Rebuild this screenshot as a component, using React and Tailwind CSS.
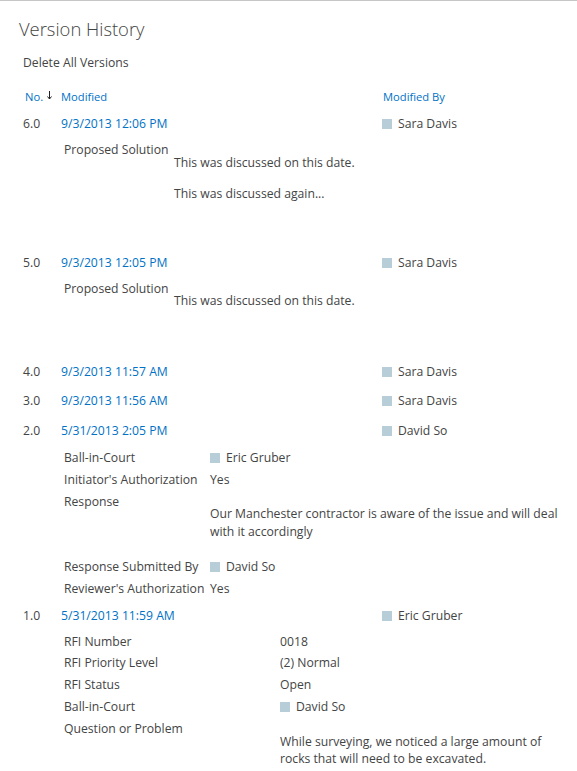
import React from 'react';

const font = "font-['Open_Sans','Noto_Sans',sans-serif]";

const Person = ({ name }) => (
  <span className="flex items-center gap-[6px] whitespace-nowrap">
    <span className="w-[10px] h-[10px] bg-[#b7cdd7]" />
    <span>{name}</span>
  </span>
);

const VersionRow = ({ no, date, by, className = '' }) => (
  <div className={`grid grid-cols-[38px_321px_1fr] h-[22px] items-center pl-[23px] ${className}`}>
    <span>{no}</span>
    <span className="text-[#0072c6] whitespace-nowrap">{date}</span>
    <Person name={by} />
  </div>
);

const Field = ({ label, width, h = 'h-[22px]', children, className = '' }) => (
  <div className={`flex pl-[64px] ${className}`}>
    <div className={`${width} ${h} flex items-center shrink-0 whitespace-nowrap`}>{label}</div>
    <div className={`${h} flex items-center whitespace-nowrap`}>{children}</div>
  </div>
);

const LongField = ({ label, width, pt, lh, lines, className = '' }) => (
  <div className={`flex pl-[64px] ${className}`}>
    <div className={`${width} h-[22px] flex items-center shrink-0 whitespace-nowrap`}>{label}</div>
    <div className={pt}>
      {lines.map((l, i) => (
        <div key={i} className={`${lh} whitespace-nowrap`}>{l}</div>
      ))}
    </div>
  </div>
);

export default function App() {
  return (
    <div className={`${font} w-[577px] h-[771px] overflow-hidden bg-white text-[12.2px] text-[#444]`}>
      <div className="h-px bg-[#c6c6c6]" />

      {/* Title */}
      <h1 className="mt-[13px] pl-[19px] h-[30px] leading-[30px] text-[18.4px] font-light text-[#444]">
        Version History
      </h1>

      <div className="mt-[9px] pl-[23px] h-[20px] leading-[20px]">Delete All Versions</div>

      {/* Column headers */}
      <div className="mt-[14px] grid grid-cols-[38px_321px_1fr] h-[20px] items-center pl-[23px] text-[11.2px] text-[#0072c6]">
        <span className="flex items-center pl-[2px] gap-[4px]">
          No.
          <svg width="5" height="9" viewBox="0 0 5 9" className="mt-[-2px]">
            <path d="M2.5 0 V8" stroke="#222" strokeWidth="1" />
            <path d="M0.5 5.5 L2.5 8 L4.5 5.5" stroke="#222" strokeWidth="1" fill="none" />
          </svg>
        </span>
        <span>Modified</span>
        <span className="pl-px">Modified By</span>
      </div>

      {/* 6.0 */}
      <VersionRow no="6.0" date="9/3/2013 12:06 PM" by="Sara Davis" className="mt-[6px]" />
      <div className="mt-[4px] flex pl-[64px]">
        <div className="w-[110px] h-[22px] flex items-center shrink-0 whitespace-nowrap">Proposed Solution</div>
        <div className="pt-[13px]">
          <div className="h-[22px] leading-[22px]">This was discussed on this date.</div>
          <div className="mt-[9px] h-[22px] leading-[22px]">This was discussed again...</div>
        </div>
      </div>

      {/* 5.0 */}
      <VersionRow no="5.0" date="9/3/2013 12:05 PM" by="Sara Davis" className="mt-[47px]" />
      <div className="mt-[4px] flex pl-[64px]">
        <div className="w-[110px] h-[22px] flex items-center shrink-0 whitespace-nowrap">Proposed Solution</div>
        <div className="pt-[12px]">
          <div className="h-[22px] leading-[22px]">This was discussed on this date.</div>
        </div>
      </div>

      <VersionRow no="4.0" date="9/3/2013 11:57 AM" by="Sara Davis" className="mt-[49px]" />
      <VersionRow no="3.0" date="9/3/2013 11:56 AM" by="Sara Davis" className="mt-[7px]" />
      <VersionRow no="2.0" date="5/31/2013 2:05 PM" by="David So" className="mt-[8px]" />

      <Field label="Ball-in-Court" width="w-[146px]" className="mt-[5px]">
        <Person name="Eric Gruber" />
      </Field>
      <Field label="Initiator's Authorization" width="w-[146px]">Yes</Field>
      <LongField
        label="Response"
        width="w-[146px]"
        pt="pt-[14px]"
        lh="h-[18px] leading-[18px]"
        lines={['Our Manchester contractor is aware of the issue and will deal', 'with it accordingly']}
      />
      <Field label="Response Submitted By" width="w-[146px]" className="mt-[15px]">
        <Person name="David So" />
      </Field>
      <Field label="Reviewer's Authorization" width="w-[146px]">Yes</Field>

      {/* 1.0 */}
      <VersionRow no="1.0" date="5/31/2013 11:59 AM" by="Eric Gruber" className="mt-[5px]" />
      <Field label="RFI Number" width="w-[216px]" h="h-[21.75px]" className="mt-[4px]">0018</Field>
      <Field label="RFI Priority Level" width="w-[216px]" h="h-[21.75px]">(2) Normal</Field>
      <Field label="RFI Status" width="w-[216px]" h="h-[21.75px]">Open</Field>
      <Field label="Ball-in-Court" width="w-[216px]" h="h-[21.75px]">
        <Person name="David So" />
      </Field>
      <div className="flex pl-[64px]">
        <div className="w-[216px] h-[21.75px] flex items-center shrink-0 whitespace-nowrap">Question or Problem</div>
        <div className="pt-[15px]">
          <div className="h-[17px] leading-[17px] whitespace-nowrap">While surveying, we noticed a large amount of</div>
          <div className="h-[17px] leading-[17px] whitespace-nowrap">rocks that will need to be excavated.</div>
        </div>
      </div>
    </div>
  );
}
